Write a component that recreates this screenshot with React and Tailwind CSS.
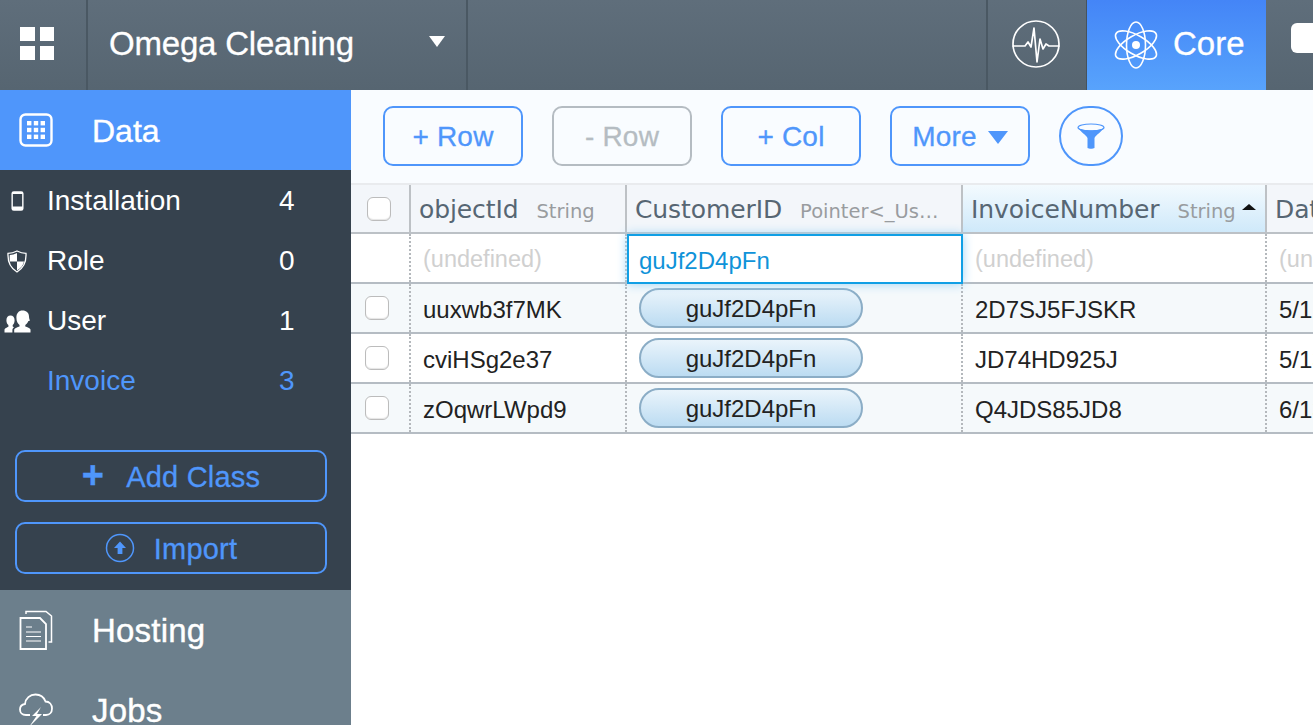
import React from 'react';

const sans = "font-['Liberation_Sans',Arial,sans-serif]";

const AppsIcon = () => (
  <div className="grid grid-cols-2 gap-[5px] w-[34px] mb-[3px]">
    <div className="h-[14px] bg-white" />
    <div className="h-[14px] bg-white" />
    <div className="h-[14px] bg-white" />
    <div className="h-[14px] bg-white" />
  </div>
);

const PulseIcon = () => (
  <svg width="50" height="50" viewBox="0 0 50 50" fill="none" stroke="white" strokeWidth="1.7" strokeLinejoin="round" strokeLinecap="round">
    <circle cx="25" cy="25" r="23" />
    <path d="M2 27 H14 L17 23 L20 28 L23 9 L26 43 L29 20 L32 30 L35 25 L38 27 H48" />
  </svg>
);

const AtomIcon = () => (
  <svg width="44" height="48" viewBox="0 0 44 48" fill="none" stroke="white" strokeWidth="1.6">
    <ellipse cx="22" cy="24" rx="9.5" ry="23" />
    <ellipse cx="22" cy="24" rx="9.5" ry="23" transform="rotate(60 22 24)" />
    <ellipse cx="22" cy="24" rx="9.5" ry="23" transform="rotate(-60 22 24)" />
    <circle cx="22" cy="24" r="4" fill="white" stroke="none" />
  </svg>
);

const DataIcon = () => (
  <svg width="34" height="34" viewBox="0 0 34 34" fill="none">
    <rect x="1.5" y="1.5" width="31" height="31" rx="5" stroke="white" strokeWidth="2.4" />
    {[8, 14.8, 21.6].map((y) =>
      [8, 14.8, 21.6].map((x) => <rect key={x + '-' + y} x={x} y={y} width="4.4" height="4.4" fill="white" />)
    )}
  </svg>
);

const PhoneIcon = () => (
  <svg width="13" height="22" viewBox="0 0 14 22">
    <path fillRule="evenodd" d="M3 0.5 H11 A2.5 2.5 0 0 1 13.5 3 V19 A2.5 2.5 0 0 1 11 21.5 H3 A2.5 2.5 0 0 1 0.5 19 V3 A2.5 2.5 0 0 1 3 0.5 Z M2 3.5 V17 H12 V3.5 Z" fill="white" />
  </svg>
);

const ShieldIcon = () => (
  <svg width="20" height="23" viewBox="0 0 20 23">
    <path d="M10 1 C13 2.6 16 3.4 19 3.4 C19.4 11 17 18 10 22 C3 18 0.6 11 1 3.4 C4 3.4 7 2.6 10 1 Z" fill="none" stroke="white" strokeWidth="1.3" />
    <path d="M10 3 V11.5 H2.8 C2.6 9.5 2.6 7 2.8 5 C5.2 4.9 7.6 4.2 10 3 Z M10 11.5 H17 C16.4 15 14 18.2 10 20.4 Z" fill="white" />
  </svg>
);

const UsersIcon = () => (
  <svg width="27" height="23" viewBox="0 0 27 23" fill="white">
    <path d="M18.5 0.5 C22.5 0.5 25 3 25 6.5 C25 8 25.5 9.5 26 10.5 L24.2 11.2 C23.6 13 22.4 14.3 21.3 14.9 V16.6 C23.3 17.4 26 18 26.5 19.5 V22.5 H10.2 V19.5 C10.8 18 13.6 17.4 15.5 16.6 V14.9 C13.8 13.8 12.4 11.5 12.4 7.5 C12.4 3.2 14.8 0.5 18.5 0.5 Z" />
    <path d="M6.5 5.5 C9 5.5 10.6 7.4 10.6 10.2 C10.6 12.4 9.8 14.2 8.7 15.1 V16.6 L10 17.3 C9.2 18 8.6 18.7 8.4 19.6 V22.5 H0.5 V19.6 C1 18.2 3 17.5 4.4 16.8 V15.1 C3.2 14.2 2.4 12.4 2.4 10.2 C2.4 7.4 4 5.5 6.5 5.5 Z" />
  </svg>
);

const ImportIcon = () => (
  <svg width="30" height="30" viewBox="0 0 30 30" fill="none">
    <circle cx="15" cy="15" r="13.5" stroke="#4f96fb" strokeWidth="1.5" />
    <path d="M15 8.5 L21 15 H17.4 V21 H12.6 V15 H9 Z" fill="#4f96fb" />
  </svg>
);

const HostingIcon = () => (
  <svg width="34" height="40" viewBox="0 0 34 40" fill="none" stroke="white">
    <path d="M7 4 V1.5 H27 L32.5 6 V32 H29.5" strokeWidth="1.5" />
    <path d="M1.5 8 H21 L27 14 V39 H1.5 Z" strokeWidth="1.8" />
    <path d="M7 17 H13 M7 22 H22 M7 26.5 H22 M7 31 H22" strokeWidth="1.2" />
  </svg>
);

const JobsIcon = () => (
  <svg width="34" height="34" viewBox="0 0 34 34" fill="none">
    <path d="M11 22 H7 C3 22 1 19.5 1 16.5 C1 13.5 3 11.5 6 11 C6.5 5.5 11 1.5 16.5 1.5 C21.5 1.5 25 4.5 26.5 8.5 C30.5 8.5 33 11.5 33 15.5 C33 19.5 30.5 22 27 22 H24" stroke="white" strokeWidth="1.8" />
    <path d="M22 14 L13 23 H17.5 L10 34 L23 21 H18 Z" fill="white" />
  </svg>
);

const FunnelIcon = () => (
  <svg width="28" height="26" viewBox="0 0 28 26">
    <path d="M1 5 C4 9 9 12 10.5 15 V25 C12 26 16 26 17.5 25 V15 C19 12 24 9 27 5 C22 8 6 8 1 5 Z" fill="#4f96fb" />
    <ellipse cx="14" cy="4.5" rx="13" ry="3.5" fill="none" stroke="#4f96fb" strokeWidth="1.2" />
  </svg>
);

const Separator = () => <div className="w-[2px] h-full bg-[#4a5863] shrink-0" />;

const ClassRow = ({ icon, name, count, active }) => (
  <div className={`flex items-center h-[60px] relative pl-[47px] pt-[2px] text-[28px] ${active ? 'text-[#4f96fb]' : 'text-white'}`}>
    <div className="absolute left-0 w-[34px] flex justify-center">{icon}</div>
    <span className="w-[232px]">{name}</span>
    <span>{count}</span>
  </div>
);

const SideButton = ({ icon, label, gap }) => (
  <button className={`flex items-center justify-center h-[52px] w-full border-2 border-[#4f96fb] rounded-[10px] text-[#4f96fb] text-[29px] tracking-[0.2px] [-webkit-text-stroke:0.3px] ${gap}`}>
    {icon}
    <span className="pt-[3px]">{label}</span>
  </button>
);

const ToolButton = ({ label, disabled, children }) => (
  <button className={`flex items-center justify-center gap-[11px] w-[140px] h-[60px] pt-[2px] border-2 rounded-[10px] text-[28px] tracking-[0.2px] [-webkit-text-stroke:0.3px] ${disabled ? 'border-[#b5bcc2] text-[#b5bcc2]' : 'border-[#4f96fb] text-[#4f96fb]'}`}>
    {label}
    {children}
  </button>
);

const Checkbox = () => <div className="w-[24px] h-[24px] bg-white border border-[#bcbcbc] rounded-[6px] shadow-[inset_0_-1px_1px_#e5e5e5]" />;

const headerText = "font-['DejaVu_Sans',Verdana,sans-serif]";

const HeadCell = ({ width, name, type, sorted }) => (
  <div className={`flex items-center shrink-0 h-full pl-[8px] pt-[2px] border-r-2 border-[#bdc1c5] overflow-hidden whitespace-nowrap ${width} ${sorted ? 'bg-gradient-to-b from-[#f3fafe] to-[#cfe9fa]' : ''}`}>
    <span className={`${headerText} text-[25px] leading-none tracking-[-0.1px] text-[#576673]`}>{name}</span>
    {type && <span className={`${headerText} text-[19.5px] leading-none text-[#999c9f] ml-[18px] mt-[4px]`}>{type}</span>}
    {sorted && <div className="ml-[6px] mb-[6px] w-0 h-0 border-x-[7px] border-x-transparent border-b-[6px] border-b-[#111]" />}
  </div>
);

const Cell = ({ width, children, muted }) => (
  <div className={`flex items-center shrink-0 h-full pl-[12px] pt-[3px] border-r-2 border-dotted border-[#b4b8bc] whitespace-nowrap ${width} ${muted ? 'text-[23.5px] text-[#d0d0d0]' : 'text-[24px] text-[#222]'}`}>
    {children}
  </div>
);

const Pill = ({ id }) => (
  <div className="w-[224px] h-[40px] pt-[2px] flex items-center justify-center rounded-full border-2 border-[#8badc6] bg-gradient-to-b from-[#eaf4fb] to-[#bcdcf2] text-[#222] text-[24px]">
    {id}
  </div>
);

const rows = [
  { objectId: 'uuxwb3f7MK', invoice: '2D7SJ5FJSKR', date: '5/12/2015', stripe: true },
  { objectId: 'cviHSg2e37', invoice: 'JD74HD925J', date: '5/13/2015', stripe: false },
  { objectId: 'zOqwrLWpd9', invoice: 'Q4JDS85JD8', date: '6/13/2015', stripe: true },
];

export default function App() {
  return (
    <div className={`${sans} w-[1313px] h-[725px] overflow-hidden flex flex-col bg-white`}>
      {/* Top bar */}
      <header className="flex items-center h-[90px] shrink-0 bg-gradient-to-b from-[#5f6e7b] to-[#566571] text-white">
        <div className="w-[86px] h-full flex items-center pl-[20px] shrink-0">
          <AppsIcon />
        </div>
        <Separator />
        <div className="relative w-[378px] h-full flex items-center pl-[21px] pb-[3px] text-[33px] tracking-[-0.2px] [-webkit-text-stroke:0.3px] shrink-0">
          Omega Cleaning
          <div className="absolute left-[341px] top-[36px] w-0 h-0 border-x-[8px] border-x-transparent border-t-[11px] border-t-white" />
        </div>
        <Separator />
        <div className="flex-1 h-full" />
        <Separator />
        <div className="w-[98px] h-full flex items-center justify-center pr-[2px] pb-[2px] shrink-0">
          <PulseIcon />
        </div>
        <div className="w-[1px] h-full bg-[#46535e] shrink-0" />
        <div className="w-[179px] h-full flex items-center pl-[27px] gap-[15px] bg-gradient-to-b from-[#4485f7] to-[#58a3fc] text-[33px] [-webkit-text-stroke:0.3px] shrink-0">
          <AtomIcon />
          <span className="pb-[3px]">Core</span>
        </div>
        <div className="w-[47px] h-full flex items-center pl-[25px] shrink-0 overflow-hidden">
          <div className="w-[40px] h-[30px] mb-[14px] bg-white rounded-[6px] shrink-0" />
        </div>
      </header>

      <div className="flex flex-1 min-h-0">
        {/* Sidebar */}
        <aside className="w-[351px] shrink-0 flex flex-col bg-[#6c7f8c] overflow-hidden">
          <div className="flex items-center h-[80px] shrink-0 bg-[#4f96fb] text-white text-[32px] [-webkit-text-stroke:0.4px] pl-[19px] gap-[39px]">
            <DataIcon />
            <span className="pt-[2px]">Data</span>
          </div>
          <div className="h-[420px] shrink-0 bg-[#36424e]">
            <div className="pt-0">
              <ClassRow icon={<PhoneIcon />} name="Installation" count="4" />
              <ClassRow icon={<ShieldIcon />} name="Role" count="0" />
              <ClassRow icon={<UsersIcon />} name="User" count="1" />
              <ClassRow name="Invoice" count="3" active />
            </div>
            <div className="flex flex-col gap-[20px] px-[15px] pr-[24px] mt-[40px]">
              <SideButton
                gap="gap-[22px]"
                icon={<span className="text-[38px] leading-none font-bold mb-[2px]">+</span>}
                label="Add Class"
              />
              <SideButton gap="gap-[19px]" icon={<ImportIcon />} label="Import" />
            </div>
          </div>
          <div className="flex items-center h-[80px] shrink-0 text-white text-[33px] [-webkit-text-stroke:0.4px] tracking-[0.2px] pl-[19px] gap-[39px]">
            <HostingIcon />
            <span className="pt-[2px]">Hosting</span>
          </div>
          <div className="flex items-center h-[80px] shrink-0 text-white text-[33px] [-webkit-text-stroke:0.4px] tracking-[0.2px] pl-[19px] gap-[39px]">
            <JobsIcon />
            <span className="pt-[2px]">Jobs</span>
          </div>
        </aside>

        {/* Main */}
        <main className="flex-1 min-w-0 overflow-hidden">
          <div className="flex items-center gap-[29px] h-[93px] pl-[32px] pb-[1px] bg-[#f9fcff]">
            <ToolButton label="+ Row" />
            <ToolButton label="- Row" disabled />
            <ToolButton label="+ Col" />
            <ToolButton label="More">
              <div className="w-0 h-0 border-x-[10px] border-x-transparent border-t-[13px] border-t-[#4f96fb]" />
            </ToolButton>
            <div className="w-[64px] h-[60px] flex items-center justify-center border-2 border-[#4f96fb] rounded-full">
              <FunnelIcon />
            </div>
          </div>

          <div className="w-[1100px]">
            <div className="flex items-center h-[51px] bg-[#f3f6fa] border-t-2 border-[#e9ebee] border-b-2 border-b-[#bcc1c6]">
              <div className="flex items-center justify-center pr-[2px] shrink-0 w-[60px] h-full border-r-2 border-[#bdc1c5]">
                <Checkbox />
              </div>
              <HeadCell width="w-[216px]" name="objectId" type="String" />
              <HeadCell width="w-[336px]" name="CustomerID" type="Pointer<_Us…" />
              <HeadCell width="w-[304px]" name="InvoiceNumber" type="String" sorted />
              <HeadCell width="w-[200px]" name="Date" />
            </div>

            <div className="flex items-center h-[50px] bg-white border-b-2 border-[#b5bcc3]">
              <div className="shrink-0 w-[60px] h-full border-r-2 border-dotted border-[#b4b8bc]" />
              <Cell width="w-[216px]" muted>(undefined)</Cell>
              <div className="relative z-10 flex items-center shrink-0 w-[336px] h-[50px] pl-[10px] pt-[5px] mt-[1px] bg-white border-2 border-[#109fe5] text-[#0f93d9] text-[24px] shadow-[0_0_10px_#9fd4f5]">
                guJf2D4pFn
              </div>
              <Cell width="w-[304px]" muted>(undefined)</Cell>
              <Cell width="w-[200px]" muted>(undefined)</Cell>
            </div>

            {rows.map((row) => (
              <div key={row.objectId} className={`flex items-center h-[50px] border-b-2 border-[#b5bcc3] ${row.stripe ? 'bg-[#f5f9fb]' : 'bg-white'}`}>
                <div className="flex items-center justify-center pr-[6px] shrink-0 w-[60px] h-full border-r-2 border-dotted border-[#b4b8bc]">
                  <Checkbox />
                </div>
                <Cell width="w-[216px]">{row.objectId}</Cell>
                <div className="flex items-center shrink-0 w-[336px] h-full pl-[12px] border-r-2 border-dotted border-[#b4b8bc]">
                  <Pill id="guJf2D4pFn" />
                </div>
                <Cell width="w-[304px]">{row.invoice}</Cell>
                <Cell width="w-[200px]">{row.date}</Cell>
              </div>
            ))}
          </div>
        </main>
      </div>
    </div>
  );
}
